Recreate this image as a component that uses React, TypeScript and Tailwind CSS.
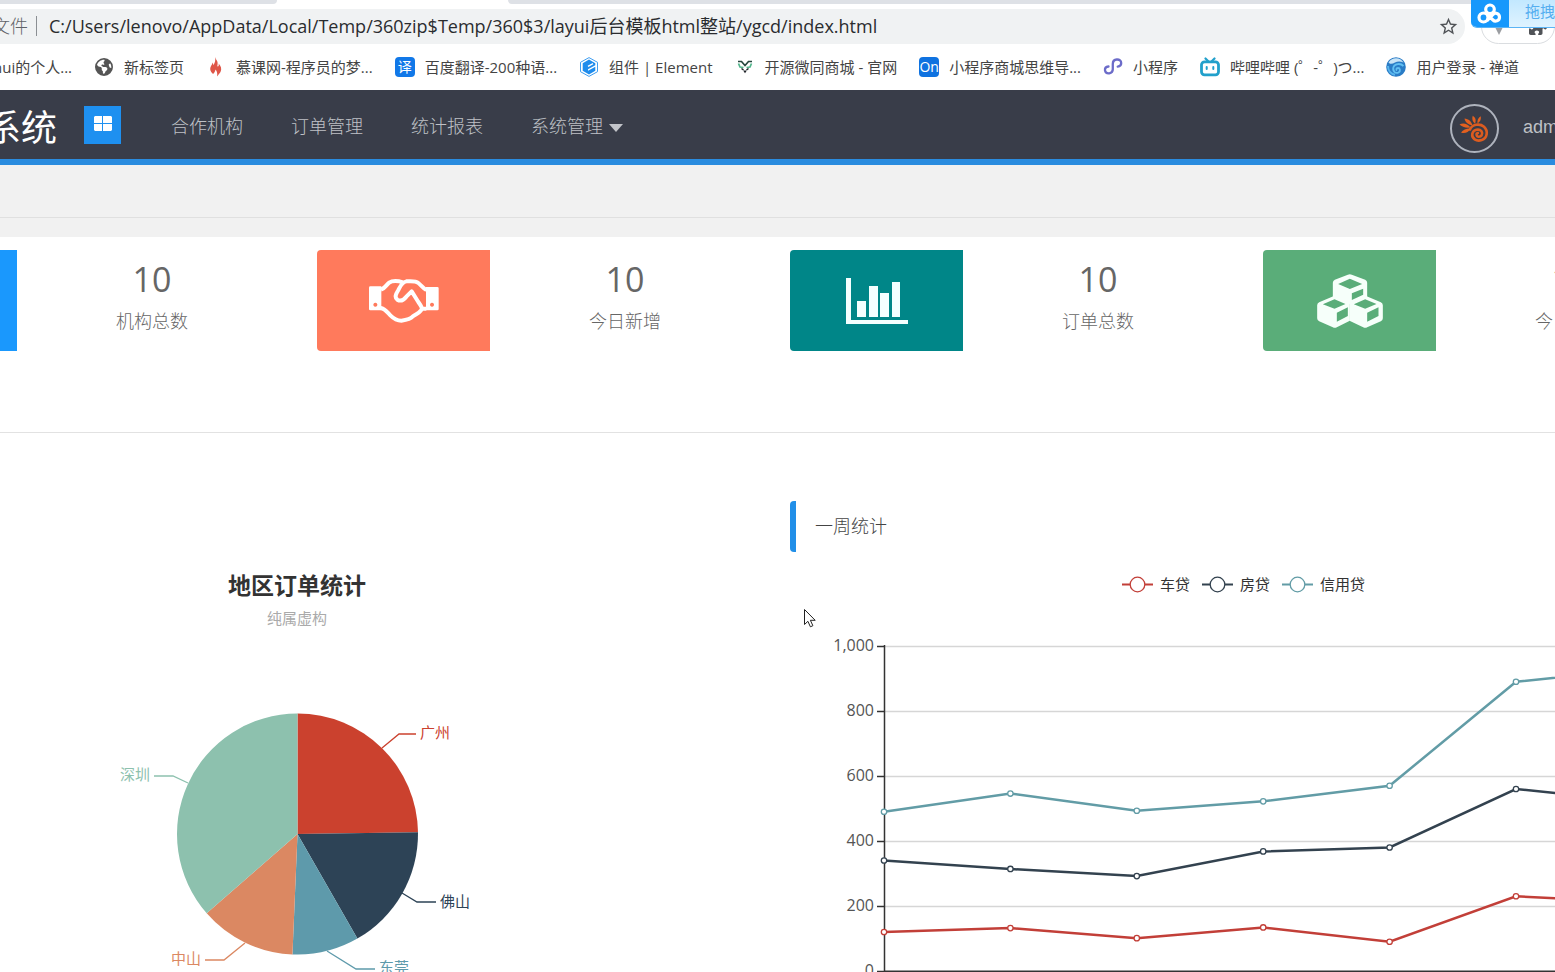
import type { ReactNode } from "react"
import { FaEarthAmericas, FaPuzzlePiece } from "react-icons/fa6"
import { MdStarBorder } from "react-icons/md"

const weekly = [
  { name: "车贷", color: "#c23f38", values: [120, 132, 101, 134, 90, 230, 210] },
  { name: "房贷", color: "#33424f", values: [340, 314, 292, 368, 380, 560, 520] },
  { name: "信用贷", color: "#629ca6", values: [490, 546, 493, 522, 570, 890, 930] },
]

const slices = [
  { name: "广州", color: "#cb412e", from: 0, to: 89.2, leader: "382,189 399,175 416,175", x: 420, y: 179, anchor: "start" },
  { name: "佛山", color: "#2d4356", from: 89.2, to: 150.2, leader: "402,334 417,343 436,343", x: 440, y: 348, anchor: "start" },
  { name: "东莞", color: "#5e9aab", from: 150.2, to: 182.4, leader: "327,392 356,410 375,410", x: 379, y: 414, anchor: "start" },
  { name: "中山", color: "#db8862", from: 182.4, to: 228.9, leader: "245,384 224,401 205,401", x: 201, y: 405, anchor: "end" },
  { name: "深圳", color: "#8dc1ae", from: 228.9, to: 360, leader: "188,224 173,217 154,217", x: 150, y: 221, anchor: "end" },
] as const

function Bookmark({ icon, children }: { icon?: ReactNode; children: ReactNode }) {
  return (
    <a href="#" className="flex shrink-0 items-center gap-[10px] whitespace-nowrap">
      {icon}
      {children}
    </a>
  )
}

function Flame() {
  return (
    <svg width="20" height="20" viewBox="0 0 20 20" fill="#df5648">
      <path d="M9 0c1 3 3 4 2.600 7-.1 1.500-.6 2 .2 2.600C12.800 9.300 13 8 12.600 6.500 15 9 16 12 14.500 15c-.8 1.600-2 2.500-3.500 4.500.6-3 .2-5-1.500-7-.5 2.500-1.300 3.500-2.500 4.500C4 14.500 3.500 11.500 5 9c1-1.500 1.300-2 1.500-3.500.6.8.8 1.600.7 2.700C9 6 9.800 3.500 9 0Z" />
    </svg>
  )
}

function ElementMark() {
  return (
    <svg width="20" height="20" viewBox="0 0 20 20">
      <path d="M10 .6 18.500 5.300v9.400L10 19.400 1.500 14.700V5.300Z" fill="#fff" stroke="#3f9df0" />
      <path d="m10 2.600 6.300 3.600v2L9 12.200v1.600l7.300-4v4L10 17.400l-6.300-3.600V6.200Z" fill="#1f8cec" />
      <path d="m9 9.300 5-2.700" stroke="#fff" strokeWidth="1.400" />
    </svg>
  )
}

function DeerMark() {
  return (
    <svg width="20" height="20" viewBox="0 0 20 20" fill="none">
      <path d="M3 4.500h3.500L10 8.500l3.500-4H17" stroke="#26453d" strokeWidth="1.700" />
      <path d="m3.500 6.500 1.500 3.500 3.500.5m8-4L15 10l-3.500.5" stroke="#53b58c" strokeWidth="1.700" />
      <path d="m6.500 11.500 2 1.500m5-1.500-2 1.500" stroke="#1b1f24" strokeWidth="1.500" />
      <path d="M8.200 13.500h3.600L10 16.200Z" fill="#1b1f24" />
    </svg>
  )
}

function MiniProgramMark() {
  return (
    <svg width="20" height="20" viewBox="0 0 20 20" fill="none" stroke="#6c6cc9" strokeWidth="2.300" strokeLinecap="round">
      <path d="M5.500 9.500C3 9.800 1.800 11.500 2 13.300c.3 2 2.200 3.200 4.300 3 2.200-.3 3.500-1.800 3.500-4V7c0-2.500 1.600-4.300 4-4.500C16.500 2.300 18.200 4 18.200 6c0 2-1.300 3.400-3.500 3.700" />
    </svg>
  )
}

function TvMark() {
  return (
    <svg width="20" height="20" viewBox="0 0 20 20" fill="none" stroke="#22a0cb" strokeLinecap="round">
      <rect x="1.500" y="4.800" width="17" height="13" rx="3" strokeWidth="2.800" />
      <path d="m5.500 1.500 2.500 2.500m6.500-2.500L12 4" strokeWidth="2.200" />
      <path d="M6.700 10v2m6.600-2v2" strokeWidth="2" />
    </svg>
  )
}

function SwirlMark() {
  return (
    <svg width="20" height="20" viewBox="0 0 20 20" fill="none">
      <circle cx="10" cy="10" r="9.800" fill="#2a7cc6" />
      <path d="M2.500 5.500c4-6 12-5 15 0-3-1.500-6-1.500-8.500 0s-5 2-6.500 0Z" fill="#c9e4f6" />
      <path d="M17.500 9c-3-3-8.500-2.500-10 1-1.300 4 2 7 5 5.500 2.500-1.500 1.500-4.500-.5-4.500s-2 2-1 2.500" stroke="#62c0f2" strokeWidth="1.800" />
      <path d="M2 9c0 4.500 3 8 7 8.700" stroke="#58b4ec" strokeWidth="2" />
    </svg>
  )
}

function SnailLogo() {
  return (
    <svg width="30" height="30" viewBox="0 0 30 30" fill="none">
      <path d="M11 15.500c2-5 9.500-6.500 14-2.800 4.500 4.200 3.300 11.300-2.300 13.400-5.400 1.800-10.200-1.600-9.400-6.300 1-4.200 6.700-5.600 9.200-2.500 1.800 2.800-.3 5.900-3.200 5.400-2.200-.5-2.400-3.300-.4-3.700" stroke="#dc5c20" strokeWidth="2.600" strokeLinecap="round" />
      <path d="M12 14.500c-3.500-.5-7.500.5-10 4 3.500 1.500 7 .2 10-4ZM11.500 13.500C6.500 14 3 13 .5 10.500c3.500-1.800 8-1 11 3ZM13.500 11.500C9 10.500 6 8 5.500 4.500c4 .3 7 3 8 7ZM16 9.800c-2.500-2-3.300-5-2.300-8 2.800 1.500 3.800 4.500 2.300 8ZM18.500 9.500c-.5-3 .7-5.700 3.300-7.200.5 3-.5 5.700-3.300 7.200Z" fill="#e3601f" />
    </svg>
  )
}

function CloudMark() {
  return (
    <svg width="26" height="22" viewBox="0 0 26 22" fill="none" stroke="#fff" strokeWidth="3.200">
      <circle cx="13" cy="6.300" r="4.300" />
      <circle cx="6.500" cy="14.500" r="4.500" />
      <path d="m10 11.500 6 5.500c2 2 6.500 1 6.500-2.700 0-4-4.500-5.300-6.700-2.600L10 17.500" />
    </svg>
  )
}

function HandshakeIcon() {
  return (
    <svg width="70" height="44" viewBox="0 0 210 132" fill="none">
      <path fillRule="evenodd" fill="#fff" d="M4 22h33v72H4q-4 0-4-4V26q0-4 4-4Zm15 49a6 6 0 1 0 .1 0ZM171 24h34q4 0 4 4v62q0 4-4 4h-34Zm18 47a6 6 0 1 0 .1 0Z" />
      <path
        d="M36 32c12-4 14-12 24-21 10-6 28-5 42-1M172 33c-10-5-14-13-24-21-8-7-24-6-36-5-14 3-18 15-24 26-8 13-12 22-3 29 10 6 20 0 27-9l16-16 20 32c10 14 14 20 7 26-7 9-15 10-23 17-8 10-26 12-35 13-14 0-25-8-33-16-10-10-16-20-29-22M154 89h18"
        stroke="#fff"
        strokeWidth="12"
        strokeLinejoin="round"
      />
    </svg>
  )
}

function BarsIcon() {
  return (
    <svg width="62" height="46" viewBox="0 0 62 46" fill="#f4ffff">
      <path d="M0 0h5v42h57v4H0ZM11 23h9v16h-9ZM23 8h9v31h-9ZM34 15h9v24h-9ZM46 4h8v35h-8Z" />
    </svg>
  )
}

function CubesIcon() {
  return (
    <svg width="66" height="54" viewBox="0 0 197 162" fill="#f6fffa" fillRule="evenodd">
      <path d="M92 2q6-3 12 0l40 15q6 3 6 9v44L98 90 47 70V26q0-6 6-9ZM98 14 63 30l35 15 37-15ZM104 58v20l34-16V44Z" />
      <path d="m52 65 46 21v54l-39 20q-6 3-12 0L6 142q-6-3-6-9V94q0-6 6-9ZM52 76 17 91l35 13 33-14ZM59 116v27l33-17v-26Z" />
      <path d="m145 65 46 20q6 3 6 9v39q0 6-6 9l-41 18q-6 3-12 0l-41-20V86ZM144 76l-34 15 34 13 34-14ZM150 116v27l34-17v-26Z" />
    </svg>
  )
}

function StatCard({ bg, icon, label }: { bg: string; icon?: ReactNode; label: string }) {
  return (
    <section className="flex h-[101px] w-[443px] shrink-0">
      <div className={`flex w-[173px] shrink-0 items-center justify-center rounded-l ${bg}`}>{icon}</div>
      <div className="flex flex-1 flex-col items-center pt-[7px] text-[#666]">
        <p className="text-[34px] leading-[44px]">10</p>
        <p className="mt-1 text-lg leading-8 font-light">{label}</p>
      </div>
    </section>
  )
}

function slicePath(from: number, to: number) {
  const point = (deg: number) => {
    const a = (deg * Math.PI) / 180
    return `${297.5 + 120.5 * Math.sin(a)} ${275 - 120.5 * Math.cos(a)}`
  }
  return `M297.5 275L${point(from)}A120.5 120.5 0 0 1 ${point(to)}Z`
}

function RegionChart() {
  return (
    <svg width="751" height="460" viewBox="0 0 751 460" className="text-[15px]">
      <text x="297" y="35" textAnchor="middle" className="fill-[#333] text-[23px] font-bold">地区订单统计</text>
      <text x="297" y="65" textAnchor="middle" className="fill-[#aaa]">纯属虚构</text>
      {slices.map((s) => (
        <g key={s.name}>
          <path d={slicePath(s.from, s.to)} fill={s.color} />
          <polyline points={s.leader} fill="none" stroke={s.color} strokeWidth="1.300" />
          <text x={s.x} y={s.y} textAnchor={s.anchor} fill={s.color}>{s.name}</text>
        </g>
      ))}
    </svg>
  )
}

function WeekChart() {
  const x = (i: number) => 94 + i * 126.4
  const y = (v: number) => 403 - v * 0.325
  return (
    <svg width="907" height="450" viewBox="0 0 907 450" className="text-base">
      {[0, 200, 400, 600, 800, 1000].map((v) => (
        <g key={v}>
          <path d={`M95 ${Math.round(y(v)) + 0.5}H853`} stroke={v ? "#d6d6d6" : "#333"} strokeWidth={v ? 1.5 : 2} />
          <path d={`M87 ${Math.round(y(v)) + 0.5}h7`} stroke="#333" strokeWidth="1.500" />
          <text x="84" y={Math.round(y(v)) + 5} textAnchor="end" className="fill-[#555]">{v.toLocaleString("en-US")}</text>
        </g>
      ))}
      <path d="M94.500 77V404" stroke="#333" strokeWidth="1.500" />
      {weekly.map((s) => (
        <g key={s.name} stroke={s.color}>
          <polyline points={s.values.map((v, i) => `${x(i)},${y(v)}`).join(" ")} fill="none" strokeWidth="2.500" />
          {s.values.map((v, i) => (
            <circle key={i} cx={x(i)} cy={y(v)} r="2.700" fill="#fff" strokeWidth="1.300" />
          ))}
        </g>
      ))}
    </svg>
  )
}

export default function App() {
  return (
    <div className="flex h-screen flex-col overflow-hidden bg-white font-['Open_Sans','Noto_Sans_CJK_SC',sans-serif] text-[#444]">
      {/* browser chrome */}
      <div className="relative shrink-0">
        <div className="flex h-1 justify-between bg-white">
          <div className="w-[277px] rounded-br-lg bg-[#dee1e6]" />
          <div className="ml-[231px] flex-1 rounded-bl-lg bg-[#dee1e6]" />
        </div>
        <div className="mt-[5px] flex h-[35px] items-center pr-[90px]">
          <div className="-ml-2 flex h-full flex-1 items-center rounded-r-full bg-[#f0f2f3] pr-[6px] pb-px text-lg">
            <label htmlFor="address" className="font-light whitespace-nowrap text-[#5f6368]">文件</label>
            <span className="mx-2 h-5 w-px bg-[#8b8f93]" />
            <input
              id="address"
              type="text"
              defaultValue="C:/Users/lenovo/AppData/Local/Temp/360zip$Temp/360$3/layui后台模板html整站/ygcd/index.html"
              className="ml-1 min-w-0 flex-1 bg-transparent text-[#2a2c2f] outline-none"
            />
            <button aria-label="收藏">
              <MdStarBorder className="h-[21px] w-[21px] text-[#4f5256]" />
            </button>
          </div>
        </div>
        <nav className="flex h-[46px] items-center gap-[22px] overflow-hidden text-[15px]">
          <span className="-ml-[7px]"><Bookmark>hui的个人...</Bookmark></span>
          <Bookmark icon={<FaEarthAmericas className="h-[18px] w-5 text-[#555]" />}>新标签页</Bookmark>
          <Bookmark icon={<Flame />}>慕课网-程序员的梦...</Bookmark>
          <Bookmark icon={<span className="flex h-5 w-5 items-center justify-center rounded bg-[#1178e8] text-sm text-white">译</span>}>百度翻译-200种语...</Bookmark>
          <Bookmark icon={<ElementMark />}>组件 | Element</Bookmark>
          <Bookmark icon={<DeerMark />}>开源微同商城 - 官网</Bookmark>
          <Bookmark icon={<span className="flex h-5 w-5 items-center justify-center rounded-sm bg-[#0f72e0] text-sm text-white">On</span>}>小程序商城思维导...</Bookmark>
          <Bookmark icon={<MiniProgramMark />}>小程序</Bookmark>
          <Bookmark icon={<TvMark />}>哔哩哔哩 (゜-゜)つ...</Bookmark>
          <Bookmark icon={<SwirlMark />}>用户登录 - 禅道</Bookmark>
        </nav>
        <div className="absolute top-[9px] right-0 flex h-[35px] w-[74px] items-end justify-between rounded-full border border-[#dadde0] bg-white pr-[7px] pb-2 pl-3">
          <span className="h-0 w-0 border-x-[5px] border-t-[10px] border-x-transparent border-t-[#9a9da1]" />
          <FaPuzzlePiece className="h-[18px] w-[18px] text-[#505357]" />
        </div>
        <div className="absolute top-0 right-0 flex h-7 w-[84px] overflow-hidden rounded-bl-md border-b border-[#5bb4f5] bg-gradient-to-b from-[#c2e8ff] to-[#dff3ff] text-[15px] text-[#55aef0]">
          <span className="flex w-[38px] shrink-0 items-center justify-center bg-[#1698fc]"><CloudMark /></span>
          <span className="ml-4 shrink-0 whitespace-nowrap">拖拽</span>
        </div>
      </div>

      {/* site header */}
      <header className="flex h-[75px] shrink-0 items-center border-b-[6px] border-[#2a8cdf] bg-[#393d49] text-lg text-[#bfc1c6]">
        <h1 className="mt-[6px] -ml-[15px] text-4xl whitespace-nowrap text-white">系统</h1>
        <button aria-label="菜单" className="ml-[27px] flex h-[38px] w-[37px] justify-center bg-[#1e90f0] pt-[10px]">
          <svg width="18" height="15" viewBox="0 0 18 15" fill="#fff">
            <path d="M1 0h7v7H0V1ZM9 0h8l1 1v6H9ZM0 8h8v7H1l-1-1ZM9 8h9v6l-1 1H9Z" />
          </svg>
        </button>
        <nav className="mt-[3px] ml-[50px] flex gap-12 font-light">
          <a href="#">合作机构</a>
          <a href="#">订单管理</a>
          <a href="#">统计报表</a>
          <a href="#" className="flex items-center gap-[6px]">
            系统管理
            <span className="mt-1 h-0 w-0 border-x-[7px] border-t-[8px] border-x-transparent border-t-[#c2c4c9]" />
          </a>
        </nav>
        <a href="#" className="mt-1 -mr-[17px] ml-auto flex items-center gap-6 font-['Liberation_Sans',sans-serif]">
          <span className="mt-1 flex h-[49px] w-[49px] items-center justify-center rounded-full border-2 border-[#aeb3bd]">
            <SnailLogo />
          </span>
          admin
        </a>
      </header>

      <div className="h-[53px] shrink-0 border-b border-[#e0e0e0] bg-[#f1f1f1]" />
      <div className="h-[19px] shrink-0 bg-[#f1f1f1]" />

      <main className="min-h-0 flex-1 overflow-hidden">
        <div className="-ml-[156px] flex gap-[30px] pt-[13px]">
          <StatCard bg="bg-[#1a98fd]" label="机构总数" />
          <StatCard bg="bg-[#ff7a5c]" icon={<HandshakeIcon />} label="今日新增" />
          <StatCard bg="bg-[#008688]" icon={<BarsIcon />} label="订单总数" />
          <StatCard bg="bg-[#5aad79]" icon={<CubesIcon />} label="今日新增" />
        </div>
        <hr className="mt-[81px] border-[#e2e2e2]" />
        <div className="flex">
          <section className="w-[790px] shrink-0 pt-[126px]">
            <RegionChart />
          </section>
          <section className="shrink-0 pt-[68px]">
            <h2 className="flex h-[51px] items-center rounded-l border-l-[6px] border-[#218fe8] pb-[2px] pl-[19px] text-lg font-light">一周统计</h2>
            <div className="flex w-[907px] flex-col">
              <ul className="mt-4 flex h-8 items-center justify-center gap-3 text-[15px] text-[#333]">
                {weekly.map((s) => (
                  <li key={s.name} className="flex items-center gap-[7px]">
                    <svg width="31" height="18" viewBox="0 0 31 18" fill="none" stroke={s.color} strokeWidth="1.300">
                      <path d="M0 9.500h8m15 0h8" strokeWidth="2" />
                      <circle cx="15.500" cy="9.500" r="7.300" />
                    </svg>
                    {s.name}
                  </li>
                ))}
              </ul>
              <div className="-mt-8">
                <WeekChart />
              </div>
            </div>
          </section>
        </div>
      </main>

      {/* pointer */}
      <svg className="absolute top-[608px] left-[803px]" width="14" height="21" viewBox="0 0 14 21">
        <path d="M1.500 1.500v15l3.400-3.200 2.500 5.500 2.500-1.100-2.500-5.400h4.800Z" fill="#fff" stroke="#222" />
      </svg>
    </div>
  )
}
